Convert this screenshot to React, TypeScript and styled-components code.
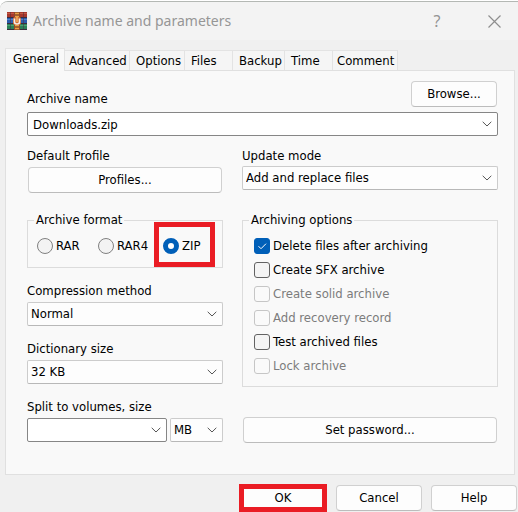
import React, { useId, useState } from "react";
import styled, { createGlobalStyle, css } from "styled-components";

const uiFont = `"DejaVu Sans Condensed", "Noto Sans", sans-serif`;

const GlobalStyle = createGlobalStyle`
  *, *::before, *::after { box-sizing: border-box; }
  body {
    margin: 0;
    background: #ffffff;
    color: #000000;
    font: 13px/16px ${uiFont};
  }
  button, input, select { font: inherit; color: inherit; margin: 0; }
`;

const Dialog = styled.main`
  margin-top: 1px;
  border-top: 1px solid #b4b8b4;
  border-top-left-radius: 8px;
  background: #f0f0f0;
  overflow: hidden;
`;

const TitleBar = styled.header`
  display: flex;
  align-items: center;
  height: 38px;
  padding: 0 16px 0 7px;
  background: #f3f3f3;
`;

const Title = styled.h1`
  flex: 1;
  margin: 0 0 0 6px;
  font: 400 14px/20px "Noto Sans", sans-serif;
  color: #969696;
`;

const CaptionButton = styled.button`
  display: grid;
  place-items: center;
  width: 16px;
  height: 24px;
  margin-left: 41px;
  padding: 0;
  border: 0;
  background: none;
  font: 400 16px/20px "Noto Sans", sans-serif;
  color: #949494;
`;

const TabList = styled.div`
  display: flex;
  align-items: flex-end;
  padding: 8px 5px 0;
`;

const Tab = styled.button<{ $width: number; $pad: number; $active?: boolean }>`
  position: relative;
  width: ${(p) => p.$width}px;
  height: 20px;
  padding: 0 0 0 ${(p) => p.$pad}px;
  border: 1px solid #e3e3e3;
  border-width: 1px 1px 0 0;
  background: #f5f5f5;
  text-align: left;
  white-space: nowrap;
  ${(p) =>
    p.$active &&
    css`
      z-index: 1;
      height: 23px;
      margin-bottom: -1px;
      padding-bottom: 3px;
      border-left-width: 1px;
      background: #f9f9f9;
    `}
`;

const Panel = styled.section`
  margin: 0 3px 0 5px;
  padding: 10px 16px 31px 21px;
  border: 1px solid #e0e0e0;
  background: #f9f9f9;
`;

const NameRow = styled.div`
  display: flex;
  justify-content: space-between;
  align-items: flex-end;
  margin: 0 1px 5px 0;
`;

const Columns = styled.div`
  display: grid;
  grid-template-columns: 196fr 256fr;
  gap: 19px;
  margin-top: 12px;
`;

const Stack = styled.div`
  display: flex;
  flex-direction: column;
  gap: 15px;
  min-width: 0;
`;

const OptionsStack = styled(Stack)`
  gap: 30px;
`;

const Field = styled.div<{ $gap?: number }>`
  display: flex;
  flex-direction: column;
  gap: ${(p) => p.$gap ?? 3}px;
`;

const Caption = styled.label`
  display: block;
  height: 16px;
`;

const PushButton = styled.button`
  height: 26px;
  border: 1px solid #d0d0d0;
  border-bottom-color: #bcbcbc;
  border-radius: 4px;
  background: #fdfdfd;
  padding: 0;
`;

const BrowseButton = styled(PushButton)`
  width: 86px;
`;

const WideButton = styled(PushButton)`
  margin: 0 1px;
`;

const ProfileButton = styled(WideButton)`
  margin-top: 1px;
`;

const ComboFrame = styled.div<{ $editable?: boolean }>`
  display: grid;
  grid-template-columns: minmax(0, 1fr) 20px;
  align-items: center;
  height: 24px;
  border: 1px solid ${(p) => (p.$editable ? "#868686" : "#cccccc")};
  border-bottom-color: ${(p) => (p.$editable ? "#868686" : "#b8b8b8")};
  border-radius: 2px;
  background: ${(p) => (p.$editable ? "#ffffff" : "#fdfdfd")};
`;

const SelectBox = styled.select`
  grid-area: 1 / 1 / 2 / 3;
  width: 100%;
  height: 22px;
  padding: 0 20px 0 3px;
  border: 0;
  background: none;
  appearance: none;
  outline: none;
`;

const TextBox = styled.input`
  width: 100%;
  height: 22px;
  padding: 0 0 0 5px;
  border: 0;
  background: none;
  outline: none;
`;

const DropButton = styled.button`
  display: flex;
  align-items: center;
  justify-content: center;
  height: 22px;
  padding: 0;
  border: 0;
  background: none;
`;

const ChevronIcon = styled.svg`
  grid-area: 1 / 2;
  justify-self: center;
  pointer-events: none;
`;

const SizeRow = styled.div`
  display: grid;
  grid-template-columns: 1fr 53px;
  gap: 3px;
`;

const Group = styled.fieldset`
  min-width: 0;
  margin: 0;
  padding: 6px 11px 8px;
  border: 1px solid #dcdcdc;
`;

const Legend = styled.legend`
  height: 16px;
  margin-left: -5px;
  padding: 0 2px;
`;

const RadioRow = styled.div`
  display: flex;
  height: 25px;
  padding-top: 4px;
  margin-left: -2px;
`;

const RadioLabel = styled.label<{ $width: number }>`
  position: relative;
  display: flex;
  align-items: center;
  gap: 3px;
  width: ${(p) => p.$width}px;
  height: 16px;
`;

const Highlight = styled.span`
  position: absolute;
  inset: -16px -15px -13px -9px;
  border: 5px solid #ea1c24;
  pointer-events: none;
`;

const Radio = styled.input`
  flex: none;
  width: 16px;
  height: 16px;
  border: 1px solid #808080;
  border-radius: 50%;
  background: #f3f3f3;
  appearance: none;
  &:checked {
    border: 5px solid #005fb8;
    background: #ffffff;
  }
`;

const CheckLabel = styled.label<{ $disabled?: boolean }>`
  display: grid;
  grid-template-columns: 16px 1fr;
  align-items: center;
  gap: 3px;
  height: 24px;
  color: ${(p) => (p.$disabled ? "#7c7c7c" : "#000000")};
`;

const CheckBox = styled.input`
  grid-area: 1 / 1;
  width: 16px;
  height: 16px;
  border: 1px solid #626262;
  border-radius: 3px;
  background: #f4f4f4;
  appearance: none;
  &:disabled {
    border-color: #c6c6c6;
    background: #fafafa;
  }
  &:checked {
    border-color: #005fb8;
    background: #005fb8;
  }
`;

const TickIcon = styled.svg`
  grid-area: 1 / 1;
  z-index: 1;
  pointer-events: none;
`;

const Footer = styled.footer`
  display: flex;
  justify-content: flex-end;
  align-items: center;
  gap: 9px;
  padding: 9px 1px 0;
`;

const FooterButton = styled(PushButton)`
  width: 86px;
`;

const MarkedButton = styled(PushButton)`
  width: 88px;
  height: 28px;
  border: 5px solid #ea1c24;
  border-radius: 0;
`;

function Logo() {
  return (
    <svg width="20" height="18" viewBox="0 0 20 18" aria-hidden="true">
      <rect width="20" height="18" fill="#3a2c3c" />
      <rect y="0" width="20" height="5" fill="#a8382c" />
      <rect y="6" width="20" height="5" fill="#2a5cac" />
      <rect y="12" width="20" height="5" fill="#2a8058" />
      <path d="M0 1.5h20" stroke="#c25a44" />
      <path d="M0 7.5h20" stroke="#4c82cc" />
      <path d="M0 13.5h20" stroke="#4aa070" />
      <path d="M3.5 0v17M16.5 0v17" stroke="#4a2c40" strokeOpacity=".5" />
      <rect x="7" width="6" height="18" fill="#8e4a28" />
      <path d="M8 1.5h4M8 4.5h4M8 13.5h4M8 16.5h4" stroke="#eca042" strokeWidth="1.6" />
      <rect x="6" y="5" width="8" height="8" rx="2" fill="#cf6c34" />
      <path d="M7.5 6.5v3.5q0 2 2.5 2t2.5-2V6.5" fill="none" stroke="#f4eeea" strokeWidth="1.6" />
      <path d="M10 5v5" stroke="#efb060" strokeWidth="1.6" />
    </svg>
  );
}

function Chevron() {
  return (
    <ChevronIcon width="10" height="6" viewBox="0 0 10 6" aria-hidden="true">
      <path d="M.7.8 5 5 9.3.8" fill="none" stroke="#555555" />
    </ChevronIcon>
  );
}

function Select({ id, label, options }: { id?: string; label?: string; options: string[] }) {
  return (
    <ComboFrame>
      <SelectBox id={id} aria-label={label}>
        {options.map((o) => (
          <option key={o}>{o}</option>
        ))}
      </SelectBox>
      <Chevron />
    </ComboFrame>
  );
}

function EditCombo({ id, value = "" }: { id: string; value?: string }) {
  return (
    <ComboFrame $editable>
      <TextBox id={id} defaultValue={value} />
      <DropButton type="button" aria-label="Show list">
        <Chevron />
      </DropButton>
    </ComboFrame>
  );
}

function SelectField({ label, options, gap }: { label: string; options: string[]; gap?: number }) {
  const id = useId();
  return (
    <Field $gap={gap}>
      <Caption htmlFor={id}>{label}</Caption>
      <Select id={id} options={options} />
    </Field>
  );
}

function Option({ label, checked = false, disabled }: { label: string; checked?: boolean; disabled?: boolean }) {
  const [on, setOn] = useState(checked);
  return (
    <CheckLabel $disabled={disabled}>
      <CheckBox type="checkbox" checked={on} disabled={disabled} onChange={() => setOn(!on)} />
      {on && (
        <TickIcon width="16" height="16" viewBox="0 0 16 16" aria-hidden="true">
          <path d="m4.5 8.2 2.5 2.5 5-5" fill="none" stroke="#ffffff" />
        </TickIcon>
      )}
      <span>{label}</span>
    </CheckLabel>
  );
}

const tabs = [
  { name: "General", width: 60, pad: 7 },
  { name: "Advanced", width: 65, pad: 4 },
  { name: "Options", width: 55, pad: 6 },
  { name: "Files", width: 48, pad: 6 },
  { name: "Backup", width: 52, pad: 6 },
  { name: "Time", width: 48, pad: 6 },
  { name: "Comment", width: 65, pad: 4 },
];

const formats = [
  { name: "RAR", width: 61 },
  { name: "RAR4", width: 65 },
  { name: "ZIP", width: 37 },
];

export default function App() {
  const [format, setFormat] = useState("ZIP");
  return (
    <>
      <GlobalStyle />
      <Dialog>
        <TitleBar>
          <Logo />
          <Title>Archive name and parameters</Title>
          <CaptionButton type="button" aria-label="Help">?</CaptionButton>
          <CaptionButton type="button" aria-label="Close">
            <svg width="13" height="13" viewBox="0 0 13 13" aria-hidden="true">
              <path d="m.5.5 12 12m0-12-12 12" stroke="#8e8e8e" strokeWidth="1.2" />
            </svg>
          </CaptionButton>
        </TitleBar>
        <TabList role="tablist">
          {tabs.map((t, i) => (
            <Tab key={t.name} type="button" role="tab" aria-selected={i === 0} $width={t.width} $pad={t.pad} $active={i === 0}>
              {t.name}
            </Tab>
          ))}
        </TabList>
        <Panel>
          <NameRow>
            <Caption htmlFor="archive-name">Archive name</Caption>
            <BrowseButton type="button">Browse...</BrowseButton>
          </NameRow>
          <EditCombo id="archive-name" value="Downloads.zip" />
          <Columns>
            <Field $gap={2}>
              <Caption htmlFor="profiles">Default Profile</Caption>
              <ProfileButton id="profiles" type="button" aria-label="Profiles...">Profiles...</ProfileButton>
            </Field>
            <SelectField label="Update mode" gap={2} options={["Add and replace files"]} />
            <Stack>
              <Group>
                <Legend>Archive format</Legend>
                <RadioRow>
                  {formats.map((f) => (
                    <RadioLabel key={f.name} $width={f.width}>
                      <Radio type="radio" name="format" checked={format === f.name} onChange={() => setFormat(f.name)} />
                      {f.name}
                      {f.name === "ZIP" && <Highlight />}
                    </RadioLabel>
                  ))}
                </RadioRow>
              </Group>
              <SelectField label="Compression method" options={["Normal"]} />
              <SelectField label="Dictionary size" options={["32 KB"]} />
              <Field>
                <Caption htmlFor="volume">Split to volumes, size</Caption>
                <SizeRow>
                  <EditCombo id="volume" />
                  <Select label="Volume unit" options={["MB"]} />
                </SizeRow>
              </Field>
            </Stack>
            <OptionsStack>
              <Group>
                <Legend>Archiving options</Legend>
                <Option label="Delete files after archiving" checked />
                <Option label="Create SFX archive" />
                <Option label="Create solid archive" disabled />
                <Option label="Add recovery record" disabled />
                <Option label="Test archived files" />
                <Option label="Lock archive" disabled />
              </Group>
              <WideButton type="button">Set password...</WideButton>
            </OptionsStack>
          </Columns>
        </Panel>
        <Footer>
          <MarkedButton type="button">OK</MarkedButton>
          <FooterButton type="button">Cancel</FooterButton>
          <FooterButton type="button">Help</FooterButton>
        </Footer>
      </Dialog>
    </>
  );
}
